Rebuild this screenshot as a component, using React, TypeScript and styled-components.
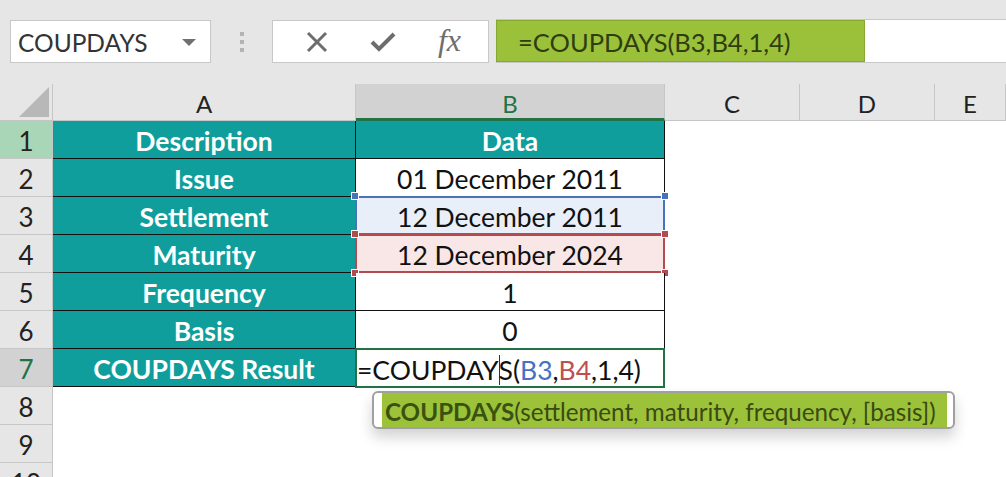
import React from 'react';
import styled, { createGlobalStyle } from 'styled-components';

const GlobalStyle = createGlobalStyle`
  html, body {
    margin: 0;
    padding: 0;
    background: #ffffff;
    font-family: Lato, "Open Sans", sans-serif;
  }
`;

const Page = styled.div`
  width: 1006px;
  height: 477px;
  overflow: hidden;
  position: relative;
  background: #fff;
`;

// formula bar area
const TopBar = styled.div`
  height: 84px;
  background: #e6e6e6;
  display: flex;
  align-items: flex-start;
  padding-top: 19px;
  box-sizing: border-box;
`;

const NameBox = styled.div`
  margin-left: 10px;
  width: 201px;
  height: 43px;
  margin-top: 1px;
  box-sizing: border-box;
  background: #fff;
  border: 1px solid #c8c8c8;
  display: flex;
  align-items: center;
  justify-content: space-between;
  padding: 2px 14px 0 7px;
  font-size: 24.5px;
  color: #333;
`;

const DropArrow = styled.span`
  width: 0;
  height: 0;
  border-left: 7px solid transparent;
  border-right: 7px solid transparent;
  border-top: 7px solid #707070;
`;

const Grip = styled.div`
  width: 61px;
  height: 43px;
  margin-top: 1px;
  display: flex;
  flex-direction: column;
  align-items: center;
  justify-content: center;
  gap: 4px;
`;

const GripDot = styled.span`
  width: 4px;
  height: 4px;
  background: #b4b4b4;
`;

const ButtonBox = styled.div`
  width: 217px;
  height: 43px;
  margin-top: 1px;
  box-sizing: border-box;
  background: #fff;
  border: 1px solid #c8c8c8;
  display: flex;
  align-items: center;
  justify-content: space-around;
  padding: 0 6px 0 12px;
`;

const FxText = styled.span`
  font-family: "Liberation Serif", "DejaVu Serif", serif;
  font-style: italic;
  font-size: 32px;
  color: #6e6e6e;
  line-height: 1;
  margin-top: -4px;
`;

const FormulaInput = styled.div`
  margin-left: 7px;
  flex: 1;
  height: 44px;
  display: flex;
  background: #fff;
  border-top: 1px solid #c8c8c8;
  border-bottom: 1px solid #c8c8c8;
  box-sizing: border-box;
`;

const FormulaGreen = styled.div`
  width: 369px;
  height: 100%;
  background: #9bc13b;
  border: 1px solid #86a832;
  box-sizing: border-box;
  display: flex;
  align-items: center;
  padding: 2px 0 0 21px;
  font-size: 25.5px;
  color: #2f3d10;
`;

// sheet grid
const Sheet = styled.div`
  display: grid;
  grid-template-columns: 53px 303px 309px 135px 135px 71px;
  grid-template-rows: 37px;
  grid-auto-rows: 38px;
`;

const ColHead = styled.div<{ $active?: boolean }>`
  background: ${({ $active }) => ($active ? '#d2d2d2' : '#e6e6e6')};
  color: ${({ $active }) => ($active ? '#217346' : '#222')};
  border-right: 1px solid #c6c6c6;
  border-bottom: ${({ $active }) => ($active ? '3px solid #217346' : '1px solid #c6c6c6')};
  box-sizing: border-box;
  display: flex;
  align-items: center;
  justify-content: center;
  font-size: 24px;
  padding-top: ${({ $active }) => ($active ? '4px' : '2px')};
`;

const Corner = styled.div`
  background: #e6e6e6;
  border-right: 1px solid #c6c6c6;
  border-bottom: 1px solid #c6c6c6;
  box-sizing: border-box;
  display: flex;
  align-items: flex-end;
  justify-content: flex-end;
  padding: 0 3px 3px 0;
`;

const RowHead = styled.div<{ $tone?: 'green' | 'gray' }>`
  background: ${({ $tone }) =>
    $tone === 'green' ? '#a9d6b7' : $tone === 'gray' ? '#d2d2d2' : '#e6e6e6'};
  color: ${({ $tone }) => ($tone === 'gray' ? '#217346' : '#222')};
  border-right: 1px solid #c6c6c6;
  border-bottom: 1px solid #c6c6c6;
  box-sizing: border-box;
  display: flex;
  align-items: center;
  justify-content: center;
  padding-top: 2px;
  font-size: 26px;
`;

const LabelCell = styled.div`
  background: #0f9e9b;
  color: #fff;
  font-weight: 700;
  font-size: 26.5px;
  border-right: 1px solid #111;
  border-bottom: 1px solid #111;
  box-sizing: border-box;
  display: flex;
  align-items: center;
  justify-content: center;
  padding-top: 3px;
`;

const DataCell = styled.div<{ $ref?: 'blue' | 'red' | 'head' }>`
  position: relative;
  background: ${({ $ref }) =>
    $ref === 'blue' ? '#e9eff9' : $ref === 'red' ? '#f9e7e7' : $ref === 'head' ? '#0f9e9b' : '#fff'};
  color: ${({ $ref }) => ($ref === 'head' ? '#fff' : '#111')};
  font-weight: ${({ $ref }) => ($ref === 'head' ? 700 : 400)};
  font-size: 26.5px;
  border-right: 1px solid #111;
  border-bottom: 1px solid #111;
  box-sizing: border-box;
  display: flex;
  align-items: center;
  justify-content: center;
  padding-top: 3px;
`;

const RefFrame = styled.div<{ $color: string }>`
  position: absolute;
  inset: -1px -1px -1px -1px;
  border: 2px solid ${({ $color }) => $color};
  pointer-events: none;
`;

const Handle = styled.span<{ $color: string; $x: 'l' | 'r'; $y: 't' | 'b' }>`
  position: absolute;
  width: 6px;
  height: 6px;
  background: ${({ $color }) => $color};
  border: 1px solid #fff;
  ${({ $x }) => ($x === 'l' ? 'left: -5px;' : 'right: -5px;')}
  ${({ $y }) => ($y === 't' ? 'top: -5px;' : 'bottom: -5px;')}
`;

const EditCell = styled.div`
  position: relative;
  background: #fff;
  border: 2px solid #217346;
  margin: -1px 0 -1px -1px;
  box-sizing: border-box;
  display: flex;
  align-items: center;
  padding-top: 3px;
  font-size: 26.5px;
  color: #111;
  white-space: nowrap;
`;

const Caret = styled.span`
  display: inline-block;
  width: 1px;
  height: 30px;
  background: #333;
  vertical-align: middle;
  margin: 0 -1px 0 0;
`;

const RefText = styled.span<{ $color: string }>`
  color: ${({ $color }) => $color};
`;

const Blank = styled.div`
  background: #fff;
`;

const Tooltip = styled.div`
  position: absolute;
  left: 372px;
  top: 391px;
  width: 583px;
  height: 38px;
  box-sizing: border-box;
  border: 2px solid #a0a0a0;
  border-radius: 6px;
  background: #fff;
  padding: 0 6px 0 8px;
  box-shadow: 0 8px 14px rgba(0, 0, 0, 0.18);
  display: flex;
  align-items: stretch;
`;

const TipFill = styled.div`
  flex: 1;
  background: #9cc23a;
  display: flex;
  align-items: center;
  padding: 2px 0 0 3px;
  font-size: 24.2px;
  color: #3a4a12;
  white-space: nowrap;
`;

const TipName = styled.b`
  color: #3a5210;
  font-weight: 700;
`;

const labels = ['Description', 'Issue', 'Settlement', 'Maturity', 'Frequency', 'Basis', 'COUPDAYS Result'];

const XIcon = () => (
  <svg width="22" height="22" viewBox="0 0 22 22">
    <path d="M2 2 L20 20 M20 2 L2 20" stroke="#6d6d6d" strokeWidth="3" fill="none" />
  </svg>
);

const CheckIcon = () => (
  <svg width="26" height="22" viewBox="0 0 26 22">
    <path d="M2 11 L9 18 L24 3" stroke="#6d6d6d" strokeWidth="4" fill="none" strokeLinejoin="miter" />
  </svg>
);

const CornerTriangle = () => (
  <svg width="30" height="30" viewBox="0 0 30 30">
    <polygon points="30,0 30,30 0,30" fill="#b8b8b8" />
  </svg>
);

const BlankCols = () => (
  <>
    <Blank />
    <Blank />
    <Blank />
  </>
);

export default function App() {
  return (
    <Page>
      <GlobalStyle />
      <TopBar>
        <NameBox>
          COUPDAYS
          <DropArrow />
        </NameBox>
        <Grip>
          <GripDot />
          <GripDot />
          <GripDot />
        </Grip>
        <ButtonBox>
          <XIcon />
          <CheckIcon />
          <FxText>fx</FxText>
        </ButtonBox>
        <FormulaInput>
          <FormulaGreen>=COUPDAYS(B3,B4,1,4)</FormulaGreen>
        </FormulaInput>
      </TopBar>

      <Sheet>
        <Corner>
          <CornerTriangle />
        </Corner>
        <ColHead>A</ColHead>
        <ColHead $active>B</ColHead>
        <ColHead>C</ColHead>
        <ColHead>D</ColHead>
        <ColHead>E</ColHead>

        <RowHead $tone="green">1</RowHead>
        <LabelCell>{labels[0]}</LabelCell>
        <DataCell $ref="head">Data</DataCell>
        <BlankCols />

        <RowHead>2</RowHead>
        <LabelCell>{labels[1]}</LabelCell>
        <DataCell>01 December 2011</DataCell>
        <BlankCols />

        <RowHead>3</RowHead>
        <LabelCell>{labels[2]}</LabelCell>
        <DataCell $ref="blue">
          12 December 2011
          <RefFrame $color="#4a72b8" />
          <Handle $color="#4a72b8" $x="l" $y="t" />
          <Handle $color="#4a72b8" $x="r" $y="t" />
        </DataCell>
        <BlankCols />

        <RowHead>4</RowHead>
        <LabelCell>{labels[3]}</LabelCell>
        <DataCell $ref="red">
          12 December 2024
          <RefFrame $color="#b24a50" />
          <Handle $color="#b24a50" $x="l" $y="t" />
          <Handle $color="#b24a50" $x="r" $y="t" />
          <Handle $color="#b24a50" $x="l" $y="b" />
          <Handle $color="#b24a50" $x="r" $y="b" />
        </DataCell>
        <BlankCols />

        <RowHead>5</RowHead>
        <LabelCell>{labels[4]}</LabelCell>
        <DataCell>1</DataCell>
        <BlankCols />

        <RowHead>6</RowHead>
        <LabelCell>{labels[5]}</LabelCell>
        <DataCell>0</DataCell>
        <BlankCols />

        <RowHead $tone="gray">7</RowHead>
        <LabelCell>{labels[6]}</LabelCell>
        <EditCell>
          =COUPDAY<Caret />S(<RefText $color="#4472c4">B3</RefText>,<RefText $color="#c0504d">B4</RefText>,1,4)
        </EditCell>
        <BlankCols />

        <RowHead>8</RowHead>
        <Blank />
        <Blank />
        <BlankCols />

        <RowHead>9</RowHead>
        <Blank />
        <Blank />
        <BlankCols />

        <RowHead>10</RowHead>
        <Blank />
        <Blank />
        <BlankCols />
      </Sheet>

      <Tooltip>
        <TipFill>
          <TipName>COUPDAYS</TipName>(settlement, maturity, frequency, [basis])
        </TipFill>
      </Tooltip>
    </Page>
  );
}
